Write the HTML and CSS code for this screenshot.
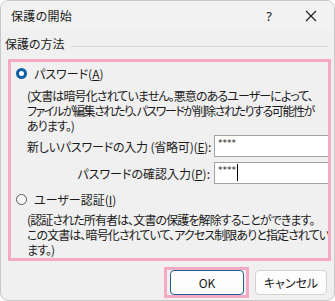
FILE: index.html
```html
<!DOCTYPE html>
<html>
<head>
<meta charset="utf-8">
<title>保護の開始</title>
<link rel="stylesheet" href="styles.css">
</head>
<body>
<div class="dialog">
    <div class="titlebar">
        <span class="title">保護の開始</span>
        <span class="help">?</span>
        <span class="close">
            <svg width="12" height="12" viewBox="0 0 12 12"><path d="M1 1 L11 11 M11 1 L1 11" stroke="#1a1a1a" stroke-width="1.1" fill="none"/></svg>
        </span>
    </div>

    <div class="group-head">
        <span>保護の方法</span>
        <span class="rule"></span>
    </div>

    <div class="group highlight">
        <div class="option">
            <span class="radio checked"></span>
            <span>パスワード(<u>A</u>)</span>
        </div>
        <p class="desc">
            <span class="line">(文書は暗号化されていません。悪意のあるユーザーによって、</span>
            <span class="line tight">ファイルが編集されたり、パスワードが削除されたりする可能性が</span>
            <span class="line">あります。)</span>
        </p>

        <div class="fields">
            <label class="field-label first">新しいパスワードの入力 (省略可)(<u>E</u>):</label>
            <div class="input">****</div>
            <label class="field-label">パスワードの確認入力(<u>P</u>):</label>
            <div class="input">****<span class="caret"></span></div>
        </div>

        <div class="option second">
            <span class="radio"></span>
            <span>ユーザー認証(<u>I</u>)</span>
        </div>
        <p class="desc desc-two">
            <span class="line">(認証された所有者は、文書の保護を解除することができます。</span>
            <span class="line">この文書は、暗号化されていて、アクセス制限ありと指定されてい</span>
            <span class="line">ます。)</span>
        </p>
    </div>

    <div class="buttons">
        <div class="focus-mark">
            <button class="btn default">OK</button>
        </div>
        <button class="btn">キャンセル</button>
    </div>
</div>
</body>
</html>
```

FILE: styles.css
```css
body {
    margin: 0;
    background-color: #fff;
    font-family: "Noto Sans CJK JP", "Noto Sans", sans-serif;
    font-size: 12px;
    color: #1a1a1a;
}

.dialog {
    width: 335px;
    height: 301px;
    box-sizing: border-box;
    border: 1px solid #c9c9c9;
    border-radius: 8px;
    background-color: #f0f0f0;
    overflow: hidden;
}

.titlebar {
    display: flex;
    align-items: center;
    height: 29px;
    padding-left: 10px;
    background-color: #f2f2f2;
}

.title {
    flex: 1;
    font-feature-settings: "palt";
    letter-spacing: 0.3px;
}

.help {
    width: 20px;
    margin-right: 26px;
    text-align: center;
    font-family: "Noto Sans", sans-serif;
    font-size: 13px;
}

.close {
    display: flex;
    width: 12px;
    margin-right: 17px;
}

.group-head {
    display: flex;
    height: 16px;
    line-height: 16px;
    margin-top: 6px;
    padding-left: 4px;
    font-feature-settings: "palt";
}

.rule {
    flex: 1;
    height: 1px;
    margin: 10px 6px 0 6px;
    background-color: #d9d9d9;
}

.group {
    height: 193px;
    margin: 7px 3px 0 7px;
    padding-top: 3px;
    box-sizing: content-box;
    overflow: hidden;
}

.highlight {
    border: 3px solid #f4a9c5;
}

.option {
    display: flex;
    align-items: center;
    height: 16px;
    padding-left: 5px;
    font-feature-settings: "palt";
}

.option.second {
    margin-top: 7px;
}

.radio {
    width: 9px;
    height: 9px;
    margin-right: 7px;
    border: 1px solid #5a5a5a;
    border-radius: 50%;
    background-color: #f7f7f7;
}

.radio.checked {
    width: 5px;
    height: 5px;
    border: 3px solid #0f5fa6;
    background-color: #fff;
}

.desc {
    margin: 7px 0 0 0;
    padding-left: 16px;
    line-height: 15px;
    white-space: nowrap;
    font-feature-settings: "palt";
    letter-spacing: -0.9px;
}

.desc .line {
    display: block;
    height: 15px;
}

.desc .line.tight {
    letter-spacing: -1.45px;
}

.desc-two {
    margin-top: 5px;
}

.fields {
    display: grid;
    grid-template-columns: 187px 1fr;
    row-gap: 5px;
    margin-top: 2px;
    padding-left: 16px;
    align-items: center;
}

.field-label {
    padding-right: 4px;
    text-align: right;
    white-space: nowrap;
    font-feature-settings: "palt";
}

.field-label.first {
    text-align: left;
    letter-spacing: -0.2px;
}

.input {
    height: 22px;
    box-sizing: border-box;
    border: 1px solid #a3a3a3;
    border-right: none;
    background-color: #fff;
    padding: 1px 0 0 3px;
    font-family: "DejaVu Sans", sans-serif;
    font-size: 9px;
    line-height: 12px;
    display: flex;
    align-items: flex-start;
}

.caret {
    width: 1px;
    height: 17px;
    margin-left: 1px;
    background-color: #000;
}

.buttons {
    display: flex;
    justify-content: flex-end;
    align-items: center;
    margin-top: 6px;
    padding-right: 7px;
}

.focus-mark {
    display: flex;
    padding: 0 2px 0 3px;
    margin-right: 6px;
    border: 3px solid #f4a9c5;
}

.btn {
    height: 25px;
    width: 72px;
    border: 1px solid #d2d2d2;
    border-radius: 4px;
    background-color: #fdfdfd;
    font-family: "Noto Sans CJK JP", sans-serif;
    font-size: 12px;
    color: #1a1a1a;
    font-feature-settings: "palt";
    padding: 0;
}

.btn.default {
    width: 74px;
    border-color: #235f8f;
}
```
